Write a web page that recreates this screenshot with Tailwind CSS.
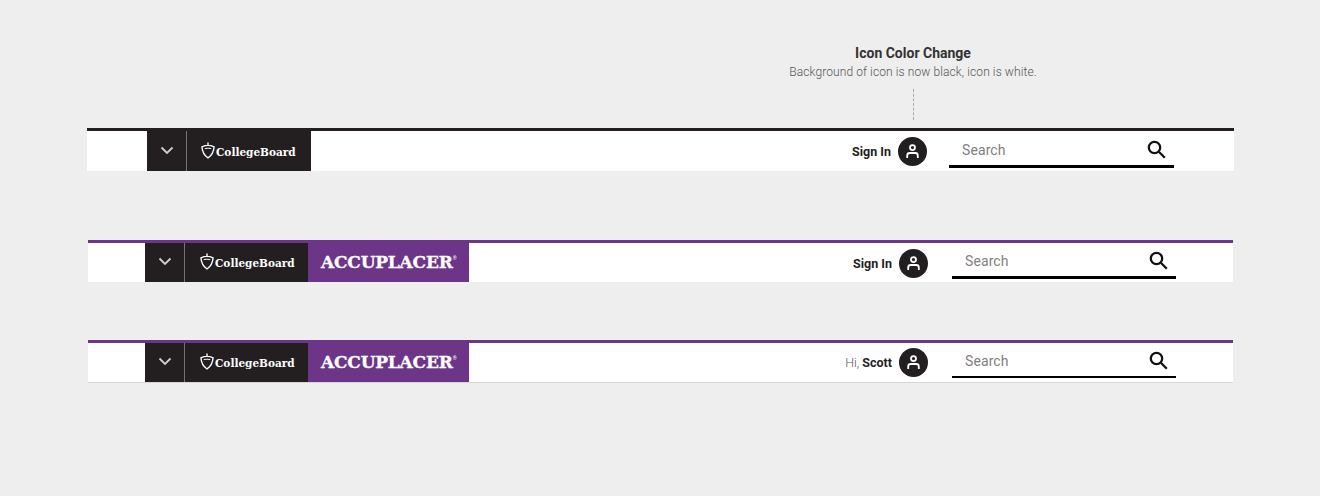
<!DOCTYPE html>
<html lang="en">
<head>
  <meta charset="UTF-8" />
  <meta name="viewport" content="width=device-width, initial-scale=1.0" />
  <title>Header icon color change</title>
  <script src="https://cdn.jsdelivr.net/npm/@tailwindcss/browser@4"></script>
</head>
<body class="bg-[#eeeeee] h-[496px] overflow-hidden font-['Roboto',sans-serif]">
  <!-- annotation -->
  <div class="ml-[763px] w-[300px] pt-[43px] flex flex-col items-center">
    <p class="text-sm leading-5 font-bold text-[#333333]">Icon Color Change</p>
    <p class="text-xs leading-4 mt-px font-light tracking-[0.1px] text-[#555555] whitespace-nowrap">Background of icon is now black, icon is white.</p>
    <div class="mt-[9px] h-[31px] border-l border-dashed border-[#aaaaaa]"></div>
  </div>

  <!-- header 1 -->
  <header class="mt-2 ml-[87px] w-[1147px] h-[43px] border-t-[3px] border-[#231f20] bg-white flex justify-between pl-[60px] pr-[60px]">
    <div class="flex h-10 bg-[#231f20] text-white">
      <div class="w-[40px] flex items-center justify-center border-r border-[#77736f]">
        <svg class="mb-[2px]" width="14" height="9" viewBox="0 0 14 9" fill="none" stroke="#d0d0d0" stroke-width="1.800"><path d="M1.500 1.500 7 7l5.500-5.500"/></svg>
      </div>
      <div class="w-[124px] pl-[14px] flex items-center">
        <svg width="14" height="17" viewBox="0 0 15 18" fill="none" stroke="#fff" stroke-width="1.500" class="mb-[2px]"><path d="M7.500 0.500v2.500M1 5q6.500-3 13 0-.5 8-6.500 12-6-4-6.500-12Z"/><path d="M4 7q3.500-1 7 0" stroke-width="1"/></svg>
        <span class="ml-px mt-[3px] font-['DejaVu_Serif',serif] font-bold text-[11.700px] [font-stretch:condensed] whitespace-nowrap">CollegeBoard</span>
      </div>
    </div>
    <div class="flex items-center">
      <span class="text-[12.500px] font-bold text-[#1e1e1e] mt-[2px]">Sign In</span>
      <div class="ml-[7px] size-[29px] rounded-full bg-[#231f20] flex items-center justify-center">
        <svg width="13" height="15" viewBox="0 0 13 15" fill="none" stroke="#fff" stroke-width="1.800"><circle cx="6.500" cy="3.600" r="2.500"/><path d="M1.200 14v-2.500q0-2.500 2.500-2.500h5.600q2.500 0 2.500 2.500V14"/></svg>
      </div>
      <div class="ml-[22px] self-start mt-[3px] w-[225px] h-[34px] border-b-[3px] border-black pl-[13px] pr-2 flex items-center justify-between">
        <span class="text-sm tracking-[0.1px] text-[#808080]">Search</span>
        <svg width="19" height="19" viewBox="0 0 19 19" fill="none" stroke="#111" stroke-width="2.300"><circle cx="7.500" cy="7.500" r="5.700"/><path d="m11.800 11.800 6 6"/></svg>
      </div>
    </div>
  </header>

  <!-- header 2 -->
  <header class="mt-[69px] ml-[88px] w-[1145px] h-[42px] border-t-[3px] border-[#6c3587] bg-white flex justify-between pl-[57px] pr-[57px]">
    <div class="flex h-[39px] text-white">
      <div class="w-[40px] bg-[#231f20] flex items-center justify-center border-r border-[#77736f]">
        <svg class="mb-[2px]" width="14" height="9" viewBox="0 0 14 9" fill="none" stroke="#d0d0d0" stroke-width="1.800"><path d="M1.500 1.500 7 7l5.500-5.500"/></svg>
      </div>
      <div class="w-[123px] bg-[#231f20] pl-[15px] flex items-center">
        <svg width="14" height="17" viewBox="0 0 15 18" fill="none" stroke="#fff" stroke-width="1.500" class="mb-[2px]"><path d="M7.500 0.500v2.500M1 5q6.500-3 13 0-.5 8-6.500 12-6-4-6.500-12Z"/><path d="M4 7q3.500-1 7 0" stroke-width="1"/></svg>
        <span class="ml-px mt-[3px] font-['DejaVu_Serif',serif] font-bold text-[11.700px] [font-stretch:condensed] whitespace-nowrap">CollegeBoard</span>
      </div>
      <div class="w-[161px] bg-[#6c3587] pl-[13px] flex items-center">
        <span class="font-['DejaVu_Serif',serif] font-bold text-[17px] tracking-[-0.2px] [-webkit-text-stroke:0.3px_white] whitespace-nowrap">ACCUPLACER</span><span class="text-[5px] mb-2">®</span>
      </div>
    </div>
    <div class="flex items-center">
      <span class="text-[12.500px] font-bold text-[#1e1e1e] mt-[3px]">Sign In</span>
      <div class="ml-[7px] mt-[2px] size-[29px] rounded-full bg-[#231f20] flex items-center justify-center">
        <svg width="13" height="15" viewBox="0 0 13 15" fill="none" stroke="#fff" stroke-width="1.800"><circle cx="6.500" cy="3.600" r="2.500"/><path d="M1.200 14v-2.500q0-2.500 2.500-2.500h5.600q2.500 0 2.500 2.500V14"/></svg>
      </div>
      <div class="ml-[24px] self-start mt-[2px] w-[224px] h-[34px] border-b-[3px] border-black pl-[13px] pr-2 flex items-center justify-between">
        <span class="text-sm tracking-[0.1px] text-[#808080]">Search</span>
        <svg width="19" height="19" viewBox="0 0 19 19" fill="none" stroke="#111" stroke-width="2.300"><circle cx="7.500" cy="7.500" r="5.700"/><path d="m11.800 11.800 6 6"/></svg>
      </div>
    </div>
  </header>

  <!-- header 3, signed in -->
  <header class="mt-[58px] ml-[88px] w-[1145px] h-[43px] border-t-[3px] border-b border-t-[#6c3587] border-b-[#d5d5d5] bg-white flex justify-between pl-[57px] pr-[57px]">
    <div class="flex h-[39px] text-white">
      <div class="w-[40px] bg-[#231f20] flex items-center justify-center border-r border-[#77736f]">
        <svg class="mb-[2px]" width="14" height="9" viewBox="0 0 14 9" fill="none" stroke="#d0d0d0" stroke-width="1.800"><path d="M1.500 1.500 7 7l5.500-5.500"/></svg>
      </div>
      <div class="w-[123px] bg-[#231f20] pl-[15px] flex items-center">
        <svg width="14" height="17" viewBox="0 0 15 18" fill="none" stroke="#fff" stroke-width="1.500" class="mb-[2px]"><path d="M7.500 0.500v2.500M1 5q6.500-3 13 0-.5 8-6.500 12-6-4-6.500-12Z"/><path d="M4 7q3.500-1 7 0" stroke-width="1"/></svg>
        <span class="ml-px mt-[3px] font-['DejaVu_Serif',serif] font-bold text-[11.700px] [font-stretch:condensed] whitespace-nowrap">CollegeBoard</span>
      </div>
      <div class="w-[161px] bg-[#6c3587] pl-[13px] flex items-center">
        <span class="font-['DejaVu_Serif',serif] font-bold text-[17px] tracking-[-0.2px] [-webkit-text-stroke:0.3px_white] whitespace-nowrap">ACCUPLACER</span><span class="text-[5px] mb-2">®</span>
      </div>
    </div>
    <div class="flex items-center">
      <span class="text-[12.500px] text-[#555555] font-light mt-[2px]">Hi, <b class="font-bold text-[#1e1e1e]">Scott</b></span>
      <div class="ml-[7px] size-[29px] rounded-full bg-[#231f20] flex items-center justify-center">
        <svg width="13" height="15" viewBox="0 0 13 15" fill="none" stroke="#fff" stroke-width="1.800"><circle cx="6.500" cy="3.600" r="2.500"/><path d="M1.200 14v-2.500q0-2.500 2.500-2.500h5.600q2.500 0 2.500 2.500V14"/></svg>
      </div>
      <div class="ml-[24px] self-start mt-[2px] w-[224px] h-[33px] border-b-2 border-black pl-[13px] pr-2 flex items-center justify-between">
        <span class="text-sm tracking-[0.1px] text-[#808080]">Search</span>
        <svg width="19" height="19" viewBox="0 0 19 19" fill="none" stroke="#111" stroke-width="2.300"><circle cx="7.500" cy="7.500" r="5.700"/><path d="m11.800 11.800 6 6"/></svg>
      </div>
    </div>
  </header>
</body>
</html>
